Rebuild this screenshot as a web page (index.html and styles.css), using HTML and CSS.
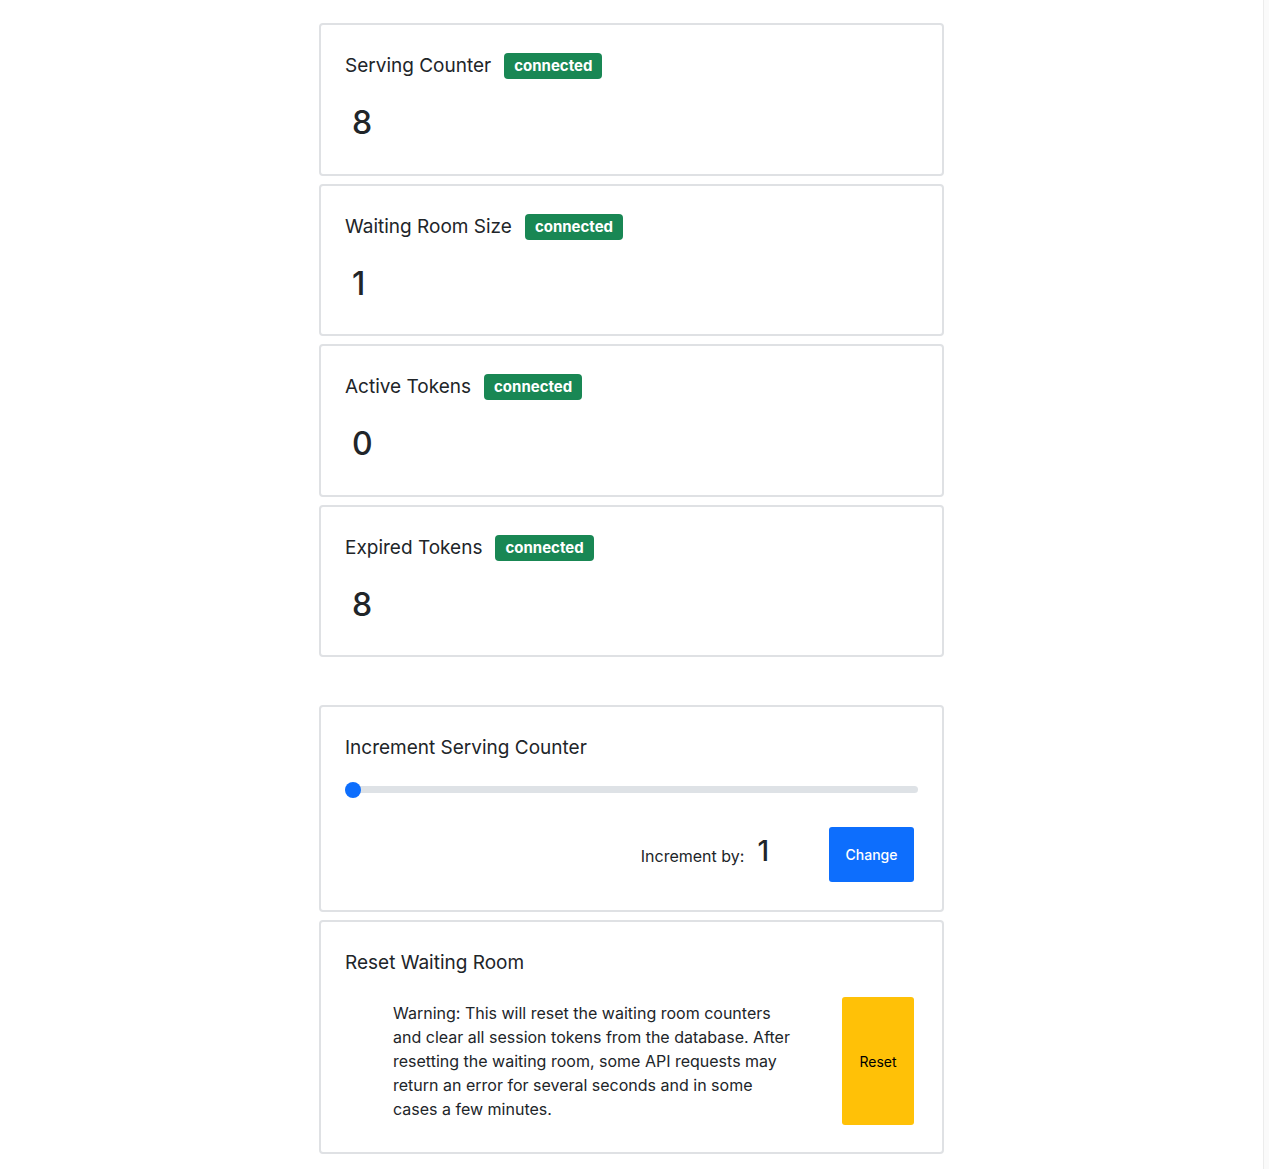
FILE: index.html
```html
<!DOCTYPE html>
<html lang="en">
<head>
<meta charset="utf-8">
<title>Waiting Room Control Panel</title>
<link rel="stylesheet" href="styles.css">
</head>
<body>
<div class="page">
  <main class="main">
    <div class="column">
      <section class="card stat">
        <div class="card-title"><span>Serving Counter</span><span class="badge">connected</span></div>
        <div class="stat-value">8</div>
      </section>
      <section class="card stat">
        <div class="card-title"><span>Waiting Room Size</span><span class="badge">connected</span></div>
        <div class="stat-value">1</div>
      </section>
      <section class="card stat">
        <div class="card-title"><span>Active Tokens</span><span class="badge">connected</span></div>
        <div class="stat-value">0</div>
      </section>
      <section class="card stat">
        <div class="card-title"><span>Expired Tokens</span><span class="badge">connected</span></div>
        <div class="stat-value">8</div>
      </section>

      <section class="card increment">
        <div class="card-title"><span>Increment Serving Counter</span></div>
        <div class="slider"><div class="slider-thumb"></div></div>
        <div class="increment-row">
          <span class="inc-label">Increment by:</span>
          <span class="inc-value">1</span>
          <button class="btn btn-primary">Change</button>
        </div>
      </section>

      <section class="card reset">
        <div class="card-title"><span>Reset Waiting Room</span></div>
        <div class="reset-row">
          <p class="warning">Warning: This will reset the waiting room counters and clear all session tokens from the database. After resetting the waiting room, some API requests may return an error for several seconds and in some cases a few minutes.</p>
          <button class="btn btn-warning">Reset</button>
        </div>
      </section>
    </div>
  </main>
  <div class="rail"></div>
</div>
</body>
</html>
```

FILE: styles.css
```css
* { box-sizing: border-box; }
html, body { margin: 0; padding: 0; background: #fff; }
body {
  font-family: Inter, "Noto Sans", "Liberation Sans", sans-serif;
  color: #212529;
}
.page {
  display: flex;
  min-height: 1169px;
}
.main {
  flex: 1;
  display: flex;
  justify-content: center;
  padding-top: 23px;
}
.rail {
  width: 6px;
  border-left: 1px solid #ececec;
  background: #fafafa;
}
.column {
  width: 625px;
  display: flex;
  flex-direction: column;
  gap: 8px;
}
.card {
  border: 2px solid #dfe1e4;
  border-radius: 4px;
  padding: 26px 24px 24px;
  background: #fff;
}
.stat { height: 152.5px; }
.card-title {
  display: flex;
  align-items: center;
  gap: 13px;
  font-size: 19px;
  line-height: 30px;
  height: 30px;
  font-weight: 400;
}
.badge {
  display: inline-block;
  background: #198754;
  color: #fff;
  font-size: 15px;
  font-weight: 700;
  line-height: 26px;
  height: 26px;
  padding: 0 10px;
  border-radius: 4px;
}
.stat-value {
  font-size: 32px;
  font-weight: 500;
  line-height: 40px;
  margin-top: 22px;
  padding-left: 7px;
}
.increment {
  margin-top: 40px;
  height: 207px;
}
.slider {
  position: relative;
  margin-top: 23px;
  height: 7px;
  background: #dee2e6;
  border-radius: 4px;
  width: 573px;
}
.slider-thumb {
  position: absolute;
  left: 0;
  top: -4.5px;
  width: 16px;
  height: 16px;
  border-radius: 50%;
  background: #0d6efd;
}
.increment-row {
  display: flex;
  justify-content: flex-end;
  align-items: center;
  margin-top: 34px;
  padding-right: 4px;
}
.inc-label {
  font-size: 16px;
  margin-right: 13px;
  margin-top: 2px;
}
.inc-value {
  font-size: 28px;
  font-weight: 500;
  margin-right: 60px;
  margin-top: -8px;
}
.btn {
  font-family: inherit;
  border: none;
  border-radius: 3px;
  font-size: 14px;
  cursor: pointer;
}
.btn-primary {
  background: #0d6efd;
  color: #fff;
  width: 85px;
  height: 55px;
  font-weight: 500;
}
.reset { height: 234px; }
.reset-row {
  display: flex;
  align-items: center;
  justify-content: space-between;
  margin-top: 19px;
  padding-right: 4px;
}
.warning {
  margin: 0 0 0 48px;
  width: 405px;
  font-size: 16px;
  line-height: 24px;
}
.btn-warning {
  background: #ffc107;
  color: #000;
  width: 72px;
  height: 128px;
}
```
